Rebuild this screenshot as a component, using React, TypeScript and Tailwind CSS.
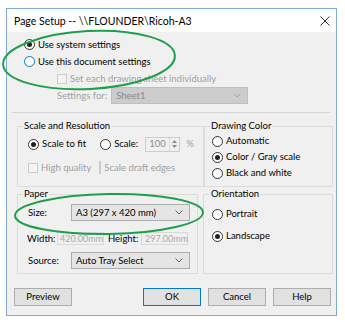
import React from "react";

const font = { fontFamily: 'Lato, "Noto Sans", sans-serif' };

function Radio({ checked, focus, disabled }: { checked?: boolean; focus?: boolean; disabled?: boolean }) {
  const border = focus ? "border-[#0078d7]" : disabled ? "border-[#bcbcbc]" : "border-[#333333]";
  return (
    <span className={`w-[11px] h-[11px] rounded-full border ${border} bg-white flex items-center justify-center shrink-0`}>
      {checked && <span className="w-[5px] h-[5px] rounded-full bg-[#222]" />}
    </span>
  );
}

function Check({ disabled }: { disabled?: boolean }) {
  return (
    <span
      className={`w-[10px] h-[10px] border ${disabled ? "border-[#cccccc] bg-[#f4f4f4]" : "border-[#333] bg-white"} shrink-0`}
    />
  );
}

function Chevron({ color = "#606060" }: { color?: string }) {
  return (
    <svg width="8" height="5" viewBox="0 0 8 5">
      <path d="M0.5 0.5 L4 4 L7.5 0.5" fill="none" stroke={color} strokeWidth="1" />
    </svg>
  );
}

function Select({ value, disabled, w }: { value: string; disabled?: boolean; w: string }) {
  return (
    <div
      className={`${w} h-[17px] border flex items-center justify-between pl-[4px] pr-[6px] ${
        disabled ? "bg-[#cccccc] border-[#bfbfbf] text-[#8a8a8a]" : "bg-[#e5e5e5] border-[#adadad] text-black"
      }`}
    >
      <span>{value}</span>
      <Chevron color={disabled ? "#a8a8a8" : "#606060"} />
    </div>
  );
}

function RadioRow({ label, checked, focus, h = "h-[16px]" }: { label: string; checked?: boolean; focus?: boolean; h?: string }) {
  return (
    <div className={`flex items-center gap-[3px] ${h}`}>
      <Radio checked={checked} focus={focus} />
      <span>{label}</span>
    </div>
  );
}

function Button({ label, primary }: { label: string; primary?: boolean }) {
  return (
    <div
      className={`w-[58px] h-[18px] flex items-center justify-center bg-[#e1e1e1] border ${
        primary ? "border-[#0078d7]" : "border-[#adadad]"
      }`}
    >
      {label}
    </div>
  );
}

export default function App() {
  return (
    <div className="relative w-[345px] h-[322px] bg-white pt-[8px] pl-[6px] text-[9.5px] text-black leading-[14px]" style={font}>
      <div className="w-[331px] h-[308px] border border-[#80a9d8] bg-[#f0f0f0] flex flex-col">
        {/* title bar */}
        <div className="h-[23px] bg-white flex items-center justify-between pl-[7px] pr-[6px]">
          <span className="text-[10.5px]">Page Setup -- \\FLOUNDER\Ricoh-A3</span>
          <svg width="10" height="10" viewBox="0 0 10 10">
            <path d="M0.5 0.5 L9.5 9.5 M9.5 0.5 L0.5 9.5" stroke="#333" strokeWidth="1" />
          </svg>
        </div>

        {/* top options */}
        <div className="pt-[4px] pl-[17px] flex flex-col">
          <RadioRow label="Use system settings" checked h="h-[17px]" />
          <RadioRow label="Use this document settings" focus h="h-[17px]" />
          <div className="h-[17px] flex items-center gap-[3px] pl-[33px] text-[#a0a0a0]">
            <Check disabled />
            <span>Set each drawing sheet individually</span>
          </div>
          <div className="h-[17px] flex items-center gap-[4px] pl-[33px]">
            <span className="text-[#a0a0a0]">Settings for:</span>
            <Select value="Sheet1" disabled w="w-[137px]" />
          </div>
        </div>

        <div className="mt-[8px] ml-[5px] mr-[6px] h-px bg-[#d5d5d5]" />

        {/* groups */}
        <div className="mt-[6px] ml-[10px] grid grid-cols-[181px_130px] gap-x-[5px]">
          <fieldset className="border border-[#dcdcdc] px-[10px] pb-[9px]">
            <legend className="ml-[-5px] px-[1px]">Scale and Resolution</legend>
            <div className="mt-[2px] h-[18px] flex items-center whitespace-nowrap">
              <Radio checked />
              <span className="ml-[3px]">Scale to fit</span>
              <span className="ml-[14px]">
                <Radio />
              </span>
              <span className="ml-[3px]">Scale:</span>
              <div className="ml-[7px] w-[35px] h-[15px] border border-[#cccccc] bg-[#f0f0f0] flex items-center justify-between pl-[3px] text-[#8c8c8c]">
                <span>100</span>
                <div className="w-[10px] h-full flex flex-col items-center justify-center gap-[2px] border-l border-[#dddddd]">
                  <svg width="5" height="3" viewBox="0 0 5 3">
                    <path d="M0 3 L2.5 0 L5 3 Z" fill="#8a8a8a" />
                  </svg>
                  <svg width="5" height="3" viewBox="0 0 5 3">
                    <path d="M0 0 L2.5 3 L5 0 Z" fill="#8a8a8a" />
                  </svg>
                </div>
              </div>
              <span className="ml-[6px] text-[#a0a0a0]">%</span>
            </div>
            <div className="mt-[6px] h-[18px] flex items-center text-[#a0a0a0] whitespace-nowrap">
              <Check disabled />
              <span className="ml-[3px]">High quality</span>
              <span className="ml-[8px]">
                <Check disabled />
              </span>
              <span className="ml-[3px]">Scale draft edges</span>
            </div>
          </fieldset>

          <fieldset className="border border-[#dcdcdc] pl-[8px] pb-[4px]">
            <legend className="ml-[-2px] px-[1px]">Drawing Color</legend>
            <RadioRow label="Automatic" />
            <RadioRow label="Color / Gray scale" checked />
            <RadioRow label="Black and white" />
          </fieldset>

          <fieldset className="border border-[#dcdcdc] pl-[10px] pb-[4px]">
            <legend className="ml-[-5px] px-[1px]">Paper</legend>
            <div className="mt-[3px] h-[17px] flex items-center">
              <span className="w-[43px]">Size:</span>
              <Select value="A3 (297 x 420 mm)" w="w-[119px]" />
            </div>
            <div className="mt-[9px] h-[17px] flex items-center whitespace-nowrap">
              <span className="w-[30px] -ml-[1px]">Width:</span>
              <div className="w-[47px] h-[13px] border border-[#d9d9d9] bg-[#f0f0f0] text-[#a8a8a8] text-[9px] flex items-center pl-[2px]">
                420.00mm
              </div>
              <span className="ml-[4px] w-[33px]">Height:</span>
              <div className="w-[47px] h-[13px] border border-[#d9d9d9] bg-[#f0f0f0] text-[#a8a8a8] text-[9px] flex items-center pl-[3px]">
                297.00mm
              </div>
            </div>
            <div className="mt-[5px] h-[17px] flex items-center">
              <span className="w-[43px]">Source:</span>
              <Select value="Auto Tray Select" w="w-[119px]" />
            </div>
          </fieldset>

          <fieldset className="border border-[#dcdcdc] pl-[8px] pb-[4px]">
            <legend className="ml-[-2px] px-[1px]">Orientation</legend>
            <div className="mt-[5px]">
              <RadioRow label="Portrait" />
            </div>
            <div className="mt-[6px]">
              <RadioRow label="Landscape" checked />
            </div>
          </fieldset>
        </div>

        {/* buttons */}
        <div className="mt-[14px] pl-[7px] pr-[5px] flex items-center">
          <Button label="Preview" />
          <div className="flex-1" />
          <div className="flex gap-[7px]">
            <Button label="OK" primary />
            <Button label="Cancel" />
            <Button label="Help" />
          </div>
        </div>
      </div>

      {/* green annotation ellipses */}
      <svg className="absolute left-0 top-0 pointer-events-none" width="345" height="322" viewBox="0 0 345 322">
        <ellipse cx="89" cy="60" rx="86" ry="29" transform="rotate(-3 89 60)" fill="none" stroke="#1f9e4c" strokeWidth="2" />
        <ellipse cx="109" cy="214" rx="94" ry="20" transform="rotate(-1 109 214)" fill="none" stroke="#1f9e4c" strokeWidth="2" />
      </svg>
    </div>
  );
}
